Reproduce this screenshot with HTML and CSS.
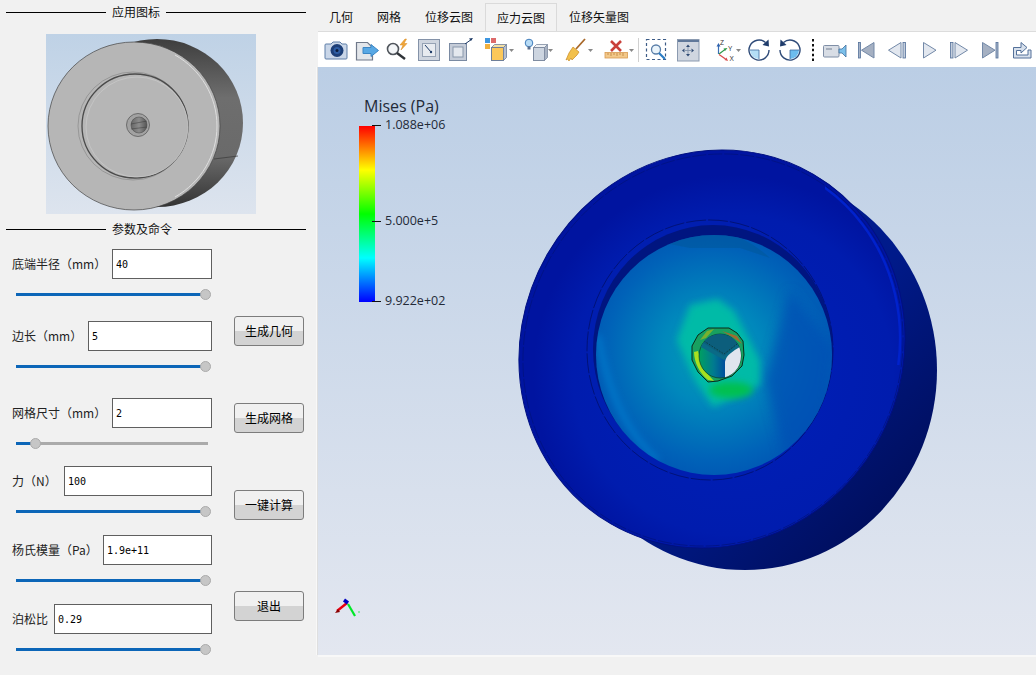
FILE: index.html
```html
<!DOCTYPE html>
<html lang="zh">
<head>
<meta charset="utf-8">
<title>应力云图</title>
<link rel="stylesheet" href="styles.css">
</head>
<body>
<div class="app">
  <aside class="side">
    <div class="title"><span class="rule rule-short"></span><span>应用图标</span><span class="rule"></span></div>
    <svg class="thumb-img" width="210" height="180" viewBox="46 34 210 180">
      <defs>
        <linearGradient id="thBg" x1="0" y1="0" x2="0" y2="1"><stop offset="0" stop-color="#bfd2e6"/><stop offset="1" stop-color="#dde4ee"/></linearGradient>
        <linearGradient id="thSide" x1="0" y1="0" x2="0" y2="1"><stop offset="0" stop-color="#3e3e3e"/><stop offset=".35" stop-color="#6e6e6e"/><stop offset=".7" stop-color="#6a6a6a"/><stop offset="1" stop-color="#333"/></linearGradient>
        <linearGradient id="thHole" x1="0" y1="0" x2="1" y2="0"><stop offset="0" stop-color="#666"/><stop offset=".5" stop-color="#8c8c8c"/><stop offset="1" stop-color="#555"/></linearGradient>
      </defs>
      <rect x="46" y="34" width="210" height="180" fill="url(#thBg)"/>
      <ellipse cx="157" cy="123" rx="86" ry="84" fill="url(#thSide)"/>
      <path d="M214 159l24-3" stroke="#3a3a3a" stroke-width=".7" fill="none"/>
      <ellipse cx="134" cy="126" rx="86" ry="84" fill="#b6b6b6" stroke="#444" stroke-width=".7"/>
      <path d="M175 55A84 82 0 0 1 175 197" fill="none" stroke="#dedede" stroke-width="1"/>
      <ellipse cx="133" cy="126" rx="55" ry="54" fill="#b6b6b6" stroke="#8a8a8a" stroke-width=".7"/>
      <ellipse cx="135" cy="126" rx="53" ry="52" fill="none" stroke="#4a4a4a" stroke-width="1.300"/>
      <ellipse cx="137" cy="127" rx="51" ry="50" fill="#b6b6b6" stroke="#cfcfcf" stroke-width=".6"/>
      <circle cx="138" cy="125" r="11.500" fill="#a2a2a2" stroke="#5c5c5c" stroke-width=".8"/>
      <circle cx="139" cy="125" r="8" fill="url(#thHole)" stroke="#444" stroke-width=".5"/>
      <line x1="131" y1="124" x2="147" y2="121" stroke="#3a3a3a" stroke-width=".5"/>
      <line x1="131" y1="129" x2="147" y2="127" stroke="#3a3a3a" stroke-width=".5"/>
    </svg>
    <div class="title title-second"><span class="rule rule-short"></span><span>参数及命令</span><span class="rule"></span></div>
    <div class="params">
      <div class="form">
        <div class="group">
          <div class="row"><label>底端半径（mm）</label><input class="field w100" value="40"></div>
          <div class="slider"><div class="fill" style="width:100%"></div><div class="knob" style="left:184px"></div></div>
        </div>
        <div class="group">
          <div class="row"><label>边长（mm）</label><input class="field w124" value="5"></div>
          <div class="slider"><div class="fill" style="width:100%"></div><div class="knob" style="left:184px"></div></div>
        </div>
        <div class="group">
          <div class="row"><label>网格尺寸（mm）</label><input class="field w100" value="2"></div>
          <div class="slider slider-grey"><div class="fill" style="width:10%"></div><div class="knob" style="left:14px"></div></div>
        </div>
        <div class="group">
          <div class="row"><label>力（N）</label><input class="field w148" value="100"></div>
          <div class="slider"><div class="fill" style="width:100%"></div><div class="knob" style="left:184px"></div></div>
        </div>
        <div class="group">
          <div class="row"><label>杨氏模量（Pa）</label><input class="field w109" value="1.9e+11"></div>
          <div class="slider"><div class="fill" style="width:100%"></div><div class="knob" style="left:184px"></div></div>
        </div>
        <div class="group">
          <div class="row"><label>泊松比</label><input class="field w158" value="0.29"></div>
          <div class="slider"><div class="fill" style="width:100%"></div><div class="knob" style="left:184px"></div></div>
        </div>
      </div>
      <div class="actions">
        <button class="btn">生成几何</button>
        <button class="btn">生成网格</button>
        <button class="btn">一键计算</button>
        <button class="btn btn-exit">退出</button>
      </div>
    </div>
  </aside>
  <main class="main">
    <nav class="tabs">
      <span class="tab tab-first">几何</span>
      <span class="tab">网格</span>
      <span class="tab">位移云图</span>
      <span class="tab active">应力云图</span>
      <span class="tab">位移矢量图</span>
    </nav>
    <div class="toolbar">
      <svg width="31" height="35" viewBox="320 32 31 35">
        <path d="M326 44h5l2-2h7l2 2h4a1.500 1.500 0 0 1 1 1v13a1 1 0 0 1-1 1h-20a1 1 0 0 1-1-1v-13a1 1 0 0 1 1-1z" fill="#c9d6e8" stroke="#5f7ea8"/>
        <circle cx="337" cy="50.500" r="6.500" fill="#1d3f78"/><circle cx="337" cy="50.500" r="3.500" fill="#2e5da3"/><circle cx="337" cy="50.500" r="1.500" fill="#0d1c3c"/>
      </svg>
      <svg width="31" height="35" viewBox="351 32 31 35">
        <path d="M356.500 42.500h11l5 5v12.500h-16z" fill="#e3e6ea" stroke="#70798a" stroke-width="1.200"/>
        <path d="M363 47.500h8v-3l7.500 6-7.500 6v-3h-8z" fill="#58a8e4" stroke="#3c86c4"/>
      </svg>
      <svg width="31" height="35" viewBox="382 32 31 35">
        <circle cx="393" cy="49" r="5.500" fill="#f4f6f8" stroke="#50555c" stroke-width="1.600"/>
        <line x1="397" y1="53" x2="405" y2="59" stroke="#2f3338" stroke-width="2.400"/>
        <path d="M405 39l-5 6h3l-2 5 6-6.500h-3l2.500-4.500z" fill="#f0a63a" stroke="#d98a20" stroke-width=".5"/>
      </svg>
      <svg width="31" height="35" viewBox="413 32 31 35">
        <rect x="418.500" y="39.500" width="21" height="21" fill="#cfd5df" stroke="#8492a8"/>
        <rect x="422.500" y="43.500" width="13" height="13" fill="#e8ebf0" stroke="#96a2b4"/>
        <line x1="425" y1="45" x2="431" y2="52" stroke="#1f3c68" stroke-width="1"/>
        <circle cx="431" cy="52" r="1.200" fill="#1f3c68"/>
      </svg>
      <svg width="31" height="35" viewBox="444 32 31 35">
        <rect x="449.500" y="43.500" width="17" height="17" fill="#c5ccd8" stroke="#7a8aa2"/>
        <rect x="453" y="47" width="10" height="10" fill="#e4e8ee" stroke="#8a98ab"/>
        <line x1="465" y1="44" x2="472" y2="39" stroke="#1f3c68" stroke-width="1"/>
        <path d="M473 38l-4 .5 2 2.500z" fill="#1f3c68"/>
      </svg>
      <svg width="40" height="35" viewBox="475 32 40 35">
        <rect x="485" y="38" width="5" height="5" fill="#3e96e0"/><rect x="491" y="38" width="5" height="5" fill="#dd6a6a"/>
        <rect x="485" y="44" width="5" height="5" fill="#f0b040"/>
        <path d="M491.500 47.500l3-3h12l-3 3z" fill="#f4e0a4" stroke="#6f7f99" stroke-width=".8"/>
        <rect x="491.500" y="47.500" width="12" height="13" fill="#fcc85a" stroke="#6f7f99"/>
        <path d="M503.500 47.500l3-3v13l-3 3z" fill="#b6bfce" stroke="#6f7f99" stroke-width=".8"/>
        <path d="M509 49h5l-2.500 3z" fill="#888"/>
      </svg>
      <svg width="40" height="35" viewBox="515 32 40 35">
        <circle cx="529" cy="43" r="3.800" fill="#b8dcf6" stroke="#3f7cbb"/><rect x="527.500" y="46.500" width="3" height="3" fill="#5b6f8e"/>
        <path d="M533.500 47.500l3-3h11l-3 3z" fill="#eef1f5" stroke="#7f8ca1" stroke-width=".8"/>
        <rect x="533.500" y="47.500" width="11" height="13" fill="#cdd5e0" stroke="#7f8ca1"/>
        <path d="M544.500 47.500l3-3v13l-3 3z" fill="#a8b2c2" stroke="#7f8ca1" stroke-width=".8"/>
        <path d="M548 49h5l-2.500 3z" fill="#888"/>
      </svg>
      <svg width="40" height="35" viewBox="555 32 40 35">
        <line x1="585" y1="39" x2="576" y2="49" stroke="#a8682a" stroke-width="1.800"/>
        <path d="M573 47l6 5-2 3-5 5-1-2-2 3-1.500-2-1.500 1 3-7z" fill="#f2c04c" stroke="#c88a22" stroke-width=".7"/>
        <path d="M588 49h5l-2.500 3z" fill="#888"/>
      </svg>
      <svg width="40" height="35" viewBox="595 32 40 35">
        <path d="M611 41l10 10M621 41l-10 10" stroke="#c9403a" stroke-width="2.600"/>
        <rect x="605" y="52.500" width="22.500" height="5.500" fill="#f2c88a" stroke="#d89a50" stroke-width=".8"/>
        <path d="M608 53v2M611 53v3M614 53v2M617 53v3M620 53v2M623 53v3" stroke="#b87830" stroke-width=".7"/>
        <path d="M629 49h5l-2.500 3z" fill="#888"/>
      </svg>
      <svg width="6" height="35" viewBox="635 32 6 35"><line x1="638.500" y1="38" x2="638.500" y2="62" stroke="#d0d0d0"/></svg>
      <svg width="30" height="35" viewBox="641 32 30 35">
        <rect x="646.500" y="39.500" width="19" height="20" fill="none" stroke="#3c5b86" stroke-width="1.200" stroke-dasharray="3 2.500"/>
        <circle cx="656" cy="49.500" r="4.500" fill="#eaf4fb" stroke="#5a7ea8" stroke-width="1.300"/>
        <line x1="659" y1="53" x2="665" y2="59" stroke="#2a7cc4" stroke-width="2.200"/>
      </svg>
      <svg width="31" height="35" viewBox="671 32 31 35">
        <rect x="677.500" y="39.500" width="21.500" height="21.500" fill="#d0d6e0" stroke="#8b9ab0"/>
        <rect x="678" y="40" width="21" height="2" fill="#60789a"/>
        <path d="M688 44.500l2 2.500h-4zM688 56.500l2-2.500h-4zM682 50.500l2.500-2v4zM694 50.500l-2.500-2v4z" fill="#2f4a73"/>
        <path d="M688 47v7M684 50.500h8" stroke="#8b9ab0"/>
      </svg>
      <svg width="42" height="35" viewBox="702 32 42 35">
        <line x1="718.500" y1="54" x2="718.500" y2="46" stroke="#3a6fb4" stroke-width="1.200"/><path d="M718.500 43l-2 3.500h4z" fill="#2f62b0"/>
        <line x1="719" y1="54" x2="725" y2="49.500" stroke="#2f9a4a" stroke-width="1.200"/><path d="M727.500 48l-4 .500 1.500 2.500z" fill="#2f9a4a"/>
        <line x1="719" y1="54.500" x2="725.500" y2="59" stroke="#d94a4a" stroke-width="1.200"/><path d="M728 61l-1.500-3.500-2 2.500z" fill="#d94a4a"/>
        <text class="axis-letter" x="720" y="44.500">Z</text><text class="axis-letter" x="728" y="50.500">Y</text><text class="axis-letter" x="729.500" y="60.500">X</text>
        <path d="M736 49h5l-2.500 3z" fill="#888"/>
      </svg>
      <svg width="31" height="35" viewBox="744 32 31 35">
        <path d="M750 50h9v9a9 9 0 0 1-9-9z" fill="#b4def6"/>
        <path d="M765.500 42.500a10 10 0 1 0 3.500 7.500" fill="none" stroke="#2e4a78" stroke-width="1.400"/>
        <path d="M768.500 39.500l.5 7-6.500-1.500z" fill="#1f3c6b"/>
        <path d="M759 50v9M750 50h9" stroke="#3f6aa0" stroke-width=".8"/>
      </svg>
      <svg width="31" height="35" viewBox="775 32 31 35">
        <path d="M790 50h9a9 9 0 0 1-9 9z" fill="#6cbcee"/>
        <path d="M783.500 42.500a10 10 0 1 1-3.500 7.500" fill="none" stroke="#2e4a78" stroke-width="1.400"/>
        <path d="M780.500 39.500l-.5 7 6.500-1.500z" fill="#1f3c6b"/>
        <path d="M790 50v9M790 50h9" stroke="#3f6aa0" stroke-width=".8"/>
      </svg>
      <svg width="14" height="35" viewBox="806 32 14 35"><line x1="813" y1="39" x2="813" y2="61" stroke="#111" stroke-width="2" stroke-dasharray="2.500 2.400"/></svg>
      <svg width="31" height="35" viewBox="820 32 31 35">
        <rect x="823.500" y="45.500" width="15.500" height="11.500" rx="1" fill="#d8dde5" stroke="#7f8ea6"/>
        <rect x="826" y="48" width="6" height="2" fill="#a6aebb"/>
        <path d="M839 49l3 0 4-4v12l-4-4h-3z" fill="#7cc0ea" stroke="#3f6e9e" stroke-width=".8"/>
      </svg>
      <svg width="31" height="35" viewBox="851 32 31 35">
        <rect x="858.500" y="42.500" width="2" height="15.500" fill="#a6b3c8" stroke="#54719a" stroke-width=".8"/>
        <path d="M874 42.500v15.500l-12.500-7.800z" fill="#a5b0c2" stroke="#7389a8"/>
      </svg>
      <svg width="31" height="35" viewBox="882 32 31 35">
        <path d="M901 42.500v15.500l-12.500-7.800z" fill="#e2e7ef" stroke="#7389a8"/>
        <rect x="903" y="42.500" width="2.500" height="15.500" fill="#c4cedd" stroke="#54719a" stroke-width=".8"/>
      </svg>
      <svg width="31" height="35" viewBox="913 32 31 35">
        <path d="M923.500 42.500v15.500l12.500-7.800z" fill="#e2e7ef" stroke="#7389a8"/>
      </svg>
      <svg width="31" height="35" viewBox="944 32 31 35">
        <rect x="950.500" y="42.500" width="2.500" height="15.500" fill="#c4cedd" stroke="#54719a" stroke-width=".8"/>
        <path d="M955 42.500v15.500l12.500-7.800z" fill="#e2e7ef" stroke="#7389a8"/>
      </svg>
      <svg width="31" height="35" viewBox="975 32 31 35">
        <path d="M982.500 42.500v15.500l12.500-7.800z" fill="#a5b0c2" stroke="#7389a8"/>
        <rect x="996" y="42.500" width="2" height="15.500" fill="#a6b3c8" stroke="#54719a" stroke-width=".8"/>
      </svg>
      <svg width="30" height="35" viewBox="1006 32 30 35">
        <path d="M1013.500 58V47.500H1021V42.500L1027 47.500L1021 53V50.500H1016.500V55H1028V50H1031V58Z" fill="#d7e0ec" stroke="#54719a" stroke-width="1"/>
      </svg>
    </div>
    <div class="view">
      <svg class="scene" width="718" height="588" viewBox="318 67 718 588">
        <defs>
          <linearGradient id="rearFill" x1="0" y1="0" x2="1" y2="1"><stop offset="0" stop-color="#0024a0"/><stop offset=".55" stop-color="#001a8a"/><stop offset=".85" stop-color="#000f60"/></linearGradient>
          <radialGradient id="diskFill" gradientUnits="userSpaceOnUse" cx="712" cy="354" r="125">
            <stop offset="0" stop-color="#00a0b4"/><stop offset=".4" stop-color="#0088bc"/><stop offset=".85" stop-color="#0062b8"/><stop offset="1" stop-color="#0058b4"/>
          </radialGradient>
          <radialGradient id="faceFill" gradientUnits="userSpaceOnUse" cx="700" cy="380" r="200"><stop offset=".4" stop-color="#001eb4"/><stop offset=".8" stop-color="#001cae"/><stop offset="1" stop-color="#0014a0"/></radialGradient>
          <linearGradient id="holeWall" x1="0" y1="0" x2="1" y2="0"><stop offset="0" stop-color="#00a060"/><stop offset=".35" stop-color="#007a90"/><stop offset=".7" stop-color="#0040a0"/><stop offset="1" stop-color="#002a70"/></linearGradient>
          <filter id="soft" x="-50%" y="-50%" width="200%" height="200%"><feGaussianBlur stdDeviation="6"/></filter>
          <filter id="softer" x="-50%" y="-50%" width="200%" height="200%"><feGaussianBlur stdDeviation="3.500"/></filter>
          <clipPath id="diskClip"><ellipse cx="714" cy="355" rx="118" ry="120"/></clipPath>
          <clipPath id="holeClip"><ellipse cx="720" cy="356" rx="21" ry="22"/></clipPath>
          <clipPath id="ridgeClip"><rect x="825" y="150" width="100" height="215"/></clipPath>
        </defs>
        <ellipse cx="745" cy="370" rx="192" ry="200" fill="url(#rearFill)"/>
        <ellipse cx="712" cy="349" rx="202" ry="190" transform="rotate(-60 712 349)" fill="url(#faceFill)" stroke="#001080" stroke-width="1"/>
        <ellipse cx="713" cy="350" rx="199" ry="187" transform="rotate(-60 713 350)" fill="none" stroke="#00127a" stroke-width=".6" stroke-dasharray="14 2"/>
        <g clip-path="url(#ridgeClip)">
          <ellipse cx="712" cy="349" rx="197" ry="185" transform="rotate(-60 712 349)" fill="none" stroke="#0022cc" stroke-width="2.500"/>
        </g>
        <ellipse cx="710" cy="350" rx="123" ry="130" fill="#001eb0" stroke="#000e60" stroke-width=".7" stroke-dasharray="20 2"/>
        <ellipse cx="713" cy="349" rx="120" ry="124" fill="#001580"/>
        <ellipse cx="714" cy="355" rx="118" ry="120" fill="url(#diskFill)"/>
        <g clip-path="url(#diskClip)">
          <path d="M640 238a118 120 0 0 1 130 20l-30-10h-50z" fill="#00589c" opacity=".6"/>
          <path d="M598 335c10 60 30 100 60 125" fill="none" stroke="#0a8ad8" stroke-width="3" filter="url(#softer)"/>
          <path d="M790 290l45 60-10 80-40 30-20-80z" fill="#0050b4" opacity=".75" filter="url(#soft)"/>
          <path d="M718 299l16 12 26 50v24l-47 22-18-27-18-40 13-35z" fill="#00c0a6" opacity=".9" filter="url(#softer)"/>
          <ellipse cx="731" cy="390" rx="22" ry="8" fill="#00c050" filter="url(#softer)"/>
        </g>
        <polygon points="708,328 729,328 737,333 743,341 744,355 742,366 732,376 718,381 708,382 698,372 692,360 692,346 698,335" fill="#18a060" stroke="#0a2a1a" stroke-width="1"/>
        <path d="M694 352c0 10 6 22 14 28l6 1-11-12-5-18z" fill="#a8e020"/>
        <path d="M700 340l7-9 7-2-8 9z" fill="#78b030"/>
        <path d="M722 331l15 5 5 8-8-6z" fill="#a06a30"/>
        <ellipse cx="720" cy="356" rx="21" ry="22" fill="url(#holeWall)" stroke="#0a2a1a" stroke-width=".6"/>
        <g clip-path="url(#holeClip)">
          <path d="M699 336h46v12l-21 12-25-14z" fill="#0a6a86"/>
          <path d="M714 334l-12 8 22 14 14-12-6-10z" fill="#0c5e7c"/>
          <path d="M725 378v-16c1-7 8-11 18-17l2 33z" fill="#dfe5ee"/>
          <path d="M704 341l20 13 17-13" stroke="#0a2a1a" stroke-width=".6" stroke-dasharray="1.500 1.500" fill="none"/>
        </g>
      </svg>
      <svg class="triad" width="30" height="30" viewBox="330 595 30 30">
        <line x1="347" y1="603" x2="337" y2="611" stroke="#e80010" stroke-width="2.400"/>
        <path d="M335 613l5-1-2-3z" fill="#800"/>
        <line x1="344" y1="600" x2="348" y2="603" stroke="#0000c0" stroke-width="3.500"/>
        <line x1="348" y1="604" x2="355" y2="616" stroke="#00e828" stroke-width="2.200"/>
        <circle cx="359" cy="612" r=".7" fill="#00e828"/>
      </svg>
      <div class="legend">
        <div class="legend-title">Mises (Pa)</div>
        <div class="legend-body">
          <div class="legend-bar"></div>
          <div class="legend-labels">
            <div class="tick"><i></i><span>1.088e+06</span></div>
            <div class="tick"><i></i><span>5.000e+5</span></div>
            <div class="tick"><i></i><span>9.922e+02</span></div>
          </div>
        </div>
      </div>
    </div>
  </main>
</div>
</body>
</html>
```
FILE: styles.css
```css
* { box-sizing: border-box; }
html, body { margin: 0; padding: 0; height: 100%; overflow: hidden; }
body {
  background: #f1f1f1;
  color: #1a1a1a;
  font-family: "Noto Sans CJK SC", "Liberation Sans", sans-serif;
  font-size: 12px;
}
svg { display: block; flex: none; }
.app { display: flex; width: 1036px; height: 675px; }

/* sidebar */
.side { width: 318px; flex: none; padding: 0 12px 0 6px; }
.title { display: flex; align-items: center; gap: 6px; height: 24px; line-height: 24px; color: #111; }
.title-second { margin-top: 3px; }
.rule { flex: 1; height: 1px; background: #000; }
.rule-short { flex: none; width: 100px; }
.thumb-img { margin: 10px 0 0 40px; }

.params { display: flex; padding: 8px 0 0 6px; }
.form { width: 200px; flex: none; }
.group { height: 72px; }
.group:nth-child(2) { height: 77px; }
.group:nth-child(3) { height: 68px; }
.group:nth-child(4), .group:nth-child(5) { height: 69px; }
.row { display: flex; align-items: center; justify-content: space-between; height: 30px; }
.row label { white-space: nowrap; color: #222; position: relative; top: -1px; }
.field {
  height: 30px;
  border: 1px solid #5f5f5f;
  background: #fff;
  padding: 0 3px;
  font-family: "DejaVu Sans Mono", "Liberation Mono", monospace;
  font-size: 10px;
  color: #000;
  outline: none;
}
.w100 { width: 100px; }
.w109 { width: 109px; }
.w124 { width: 124px; }
.w148 { width: 148px; }
.w158 { width: 158px; }

.slider { position: relative; margin: 14px 0 0 4px; width: 190px; height: 3px; background: #0c66b8; }
.slider-grey { width: 192px; background: #ababab; }
.fill { height: 3px; background: #0c66b8; }
.knob {
  position: absolute;
  top: -4px;
  width: 11px;
  height: 11px;
  border-radius: 50%;
  background: #c6c6c6;
  border: 1px solid #ababab;
}

.actions { display: flex; flex-direction: column; margin-left: 22px; padding-top: 67px; gap: 57px; }
.btn {
  width: 70px;
  height: 30px;
  padding: 0 0 2px;
  border: 1px solid #7c7c7c;
  border-radius: 3px;
  background: linear-gradient(#f0f0f0 0 50%, #d3d3d3 50% 100%);
  font: inherit;
  color: #000;
}
.btn-exit { margin-top: 14px; }

/* main */
.main { flex: 1; min-width: 0; display: flex; flex-direction: column; }
.tabs { display: flex; height: 32px; padding-top: 3px; border-bottom: 1px solid #dcdcdc; }
.tab { padding: 0 12px; height: 28px; line-height: 28px; color: #111; white-space: nowrap; }
.tab-first { padding-left: 11px; }
.tab.active { background: #f2f2f2; border: 1px solid #dadada; border-bottom: none; padding: 0 11px; }
.toolbar { display: flex; height: 35px; padding-left: 2px; background: #fff; }
.axis-letter { font-family: "Liberation Sans", sans-serif; font-size: 6.500px; fill: #333; }

.view {
  position: relative;
  height: 588px;
  background: linear-gradient(#bbcee5, #e3e7f0);
  box-shadow: -1px 0 0 #dfdfdf, -2px 0 0 #f8f8f8, 0 2px 0 #f8f8f8;
}
.scene { position: absolute; left: 0; top: 0; }
.triad { position: absolute; left: 12px; top: 528px; }
.legend { position: absolute; left: 41px; top: 28px; font-family: "Open Sans", "Liberation Sans", sans-serif; color: #232a38; }
.legend-title { font-size: 16px; line-height: 22px; margin-left: 5px; }
.legend-body { display: flex; margin-top: 9px; }
.legend-bar { width: 16px; height: 176px; background: linear-gradient(#f00, #ff0 25%, #0f0 50%, #0ff 75%, #00f); }
.legend-labels { margin: -10px 0 0 -3px; }
.tick { display: flex; align-items: center; gap: 4px; font-size: 12.500px; line-height: 18px; height: 18px; }
.tick:nth-child(2) { margin-top: 78px; }
.tick:nth-child(3) { margin-top: 62px; }
.tick i { display: block; width: 9px; height: 1px; background: #111; }
```
